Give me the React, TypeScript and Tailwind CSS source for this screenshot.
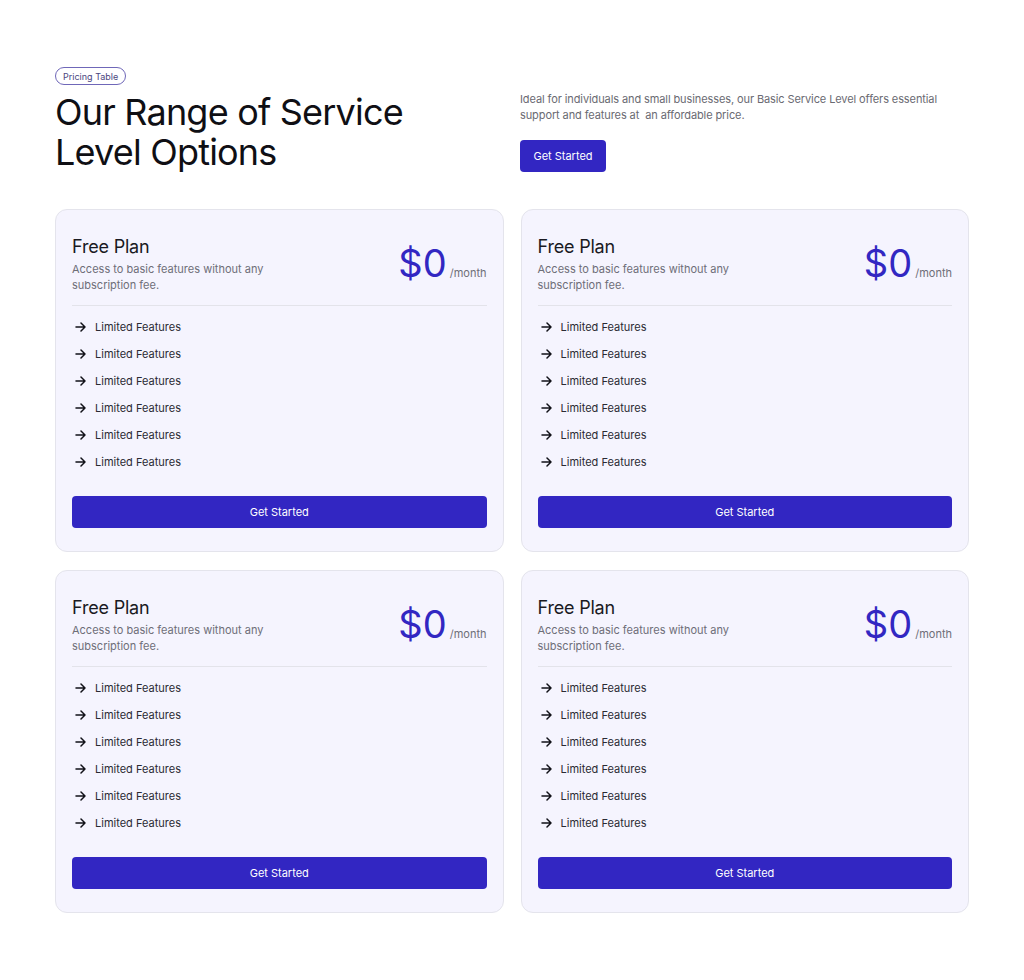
import React from "react";

const font = { fontFamily: "Inter, 'Noto Sans', sans-serif" };

function Arrow() {
  return (
    <svg width="11" height="10" viewBox="0 0 11 10" fill="none" stroke="#111118" strokeWidth="1.5" strokeLinecap="round" strokeLinejoin="round">
      <path d="M1 5h9M6 1l4 4-4 4" />
    </svg>
  );
}

function Card() {
  return (
    <div className="flex flex-col rounded-xl border border-[#e4e4ec] bg-[#f5f4fe] px-[16px] pt-[26px] pb-[23px]">
      <div className="flex items-start justify-between">
        <div>
          <div className="text-[18px] leading-[22px] text-[#1a1a22] tracking-[-0.2px]">Free Plan</div>
          <div className="mt-[3px] w-[200px] text-[11px] leading-[16px] text-[#6e6e78]">
            Access to basic features without any subscription fee.
          </div>
        </div>
        <div className="mt-[7px] flex items-baseline">
          <span className="text-[38px] leading-[40px] text-[#3227c2]">$0</span>
          <span className="ml-[3px] text-[11px] text-[#6e6e78]">/month</span>
        </div>
      </div>
      <div className="mt-[12px] h-px bg-[#e3e3ea]" />
      <ul className="mt-[13px] flex flex-col gap-[11px]">
        {Array.from({ length: 6 }).map((_, i) => (
          <li key={i} className="flex h-[16px] items-center">
            <span className="ml-[3px] flex w-[20px]"><Arrow /></span>
            <span className="text-[11px] text-[#2a2a33]">Limited Features</span>
          </li>
        ))}
      </ul>
      <button className="mt-[26px] h-[32px] w-full rounded-[4px] bg-[#3226c2] text-[11px] text-white">
        Get Started
      </button>
    </div>
  );
}

export default function App() {
  return (
    <div className="min-h-[980px] w-[1024px] bg-white" style={font}>
      <div className="mx-auto w-[914px] pt-[67px]">
        <div className="flex">
          <div className="w-[465px]">
            <div className="flex h-[18px] w-fit items-center rounded-full border border-[#6f67b8] px-[7px] text-[9px] leading-none text-[#4b4680]">
              Pricing Table
            </div>
            <h1 className="mt-[7px] text-[36px] leading-[40px] font-normal text-[#0f0f14] tracking-[-0.8px]">
              Our Range of Service
              <br />
              Level Options
            </h1>
          </div>
          <div className="pt-[24px]">
            <p className="w-[440px] text-[11px] leading-[16px] text-[#6a6a72] tracking-[-0.1px]">
              Ideal for individuals and small businesses, our Basic Service Level offers essential support and features at&nbsp; an affordable price.
            </p>
            <button className="mt-[17px] h-[32px] w-[86px] rounded-[4px] bg-[#3226c2] text-[11px] text-white">
              Get Started
            </button>
          </div>
        </div>
        <div className="mt-[37px] grid grid-cols-2 gap-x-[17px] gap-y-[18px]">
          <Card />
          <Card />
          <Card />
          <Card />
        </div>
      </div>
    </div>
  );
}
